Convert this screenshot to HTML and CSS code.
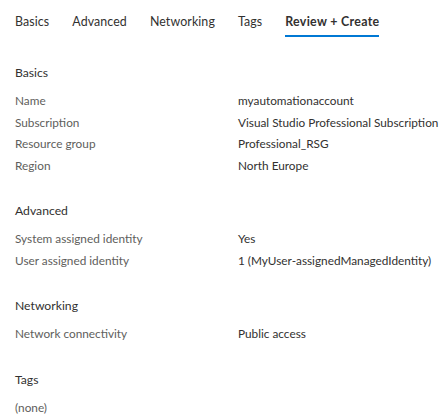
FILE: index.html
```html
<!DOCTYPE html>
<html>
<head>
<meta charset="utf-8">
<link rel="stylesheet" href="styles.css">
</head>
<body>
<nav class="tabs">
  <span class="tab">Basics</span>
  <span class="tab">Advanced</span>
  <span class="tab">Networking</span>
  <span class="tab">Tags</span>
  <span class="tab active">Review + Create</span>
</nav>
<main class="content">
  <section class="section">
    <h2 class="heading">Basics</h2>
    <div class="rows">
      <div class="label">Name</div><div class="value">myautomationaccount</div>
      <div class="label">Subscription</div><div class="value">Visual Studio Professional Subscription</div>
      <div class="label">Resource group</div><div class="value">Professional_RSG</div>
      <div class="label">Region</div><div class="value">North Europe</div>
    </div>
  </section>
  <section class="section">
    <h2 class="heading">Advanced</h2>
    <div class="rows">
      <div class="label">System assigned identity</div><div class="value">Yes</div>
      <div class="label">User assigned identity</div><div class="value">1 (MyUser-assignedManagedIdentity)</div>
    </div>
  </section>
  <section class="section">
    <h2 class="heading">Networking</h2>
    <div class="rows">
      <div class="label">Network connectivity</div><div class="value">Public access</div>
    </div>
  </section>
  <section class="section last">
    <h2 class="heading">Tags</h2>
    <div class="rows">
      <div class="label">(none)</div>
    </div>
  </section>
</main>
</body>
</html>
```
FILE: styles.css
```css
html, body {
  margin: 0;
  padding: 0;
  background: #ffffff;
}
body {
  font-family: "Segoe UI", Lato, "Open Sans", sans-serif;
  font-size: 11.8px;
  color: #323130;
  width: 445px;
  height: 415px;
  overflow: hidden;
}
.tabs {
  display: flex;
  gap: 23px;
  padding: 10px 0 0 15px;
  height: 27px;
}
.tab {
  font-size: 12.4px;
  line-height: 22px;
  color: #323130;
  height: 27px;
  box-sizing: border-box;
  padding-top: 1px;
  letter-spacing: 0.1px;
}
.tab.active {
  font-weight: 700;
  letter-spacing: 0.3px;
  border-bottom: 2px solid #0078d4;
}
.content {
  padding: 25px 0 0 15px;
}
.section {
  margin-bottom: 24px;
}
.section.last {
  margin-bottom: 0;
}
.heading {
  margin: 0 0 6px 0;
  font-size: 12.2px;
  font-weight: 400;
  line-height: 22px;
  color: #323130;
}
.rows {
  display: grid;
  grid-template-columns: 223px 1fr;
  row-gap: 0;
}
.label {
  line-height: 21.5px;
  color: #605e5c;
  white-space: nowrap;
}
.value {
  line-height: 21.5px;
  color: #323130;
  white-space: nowrap;
}
```
